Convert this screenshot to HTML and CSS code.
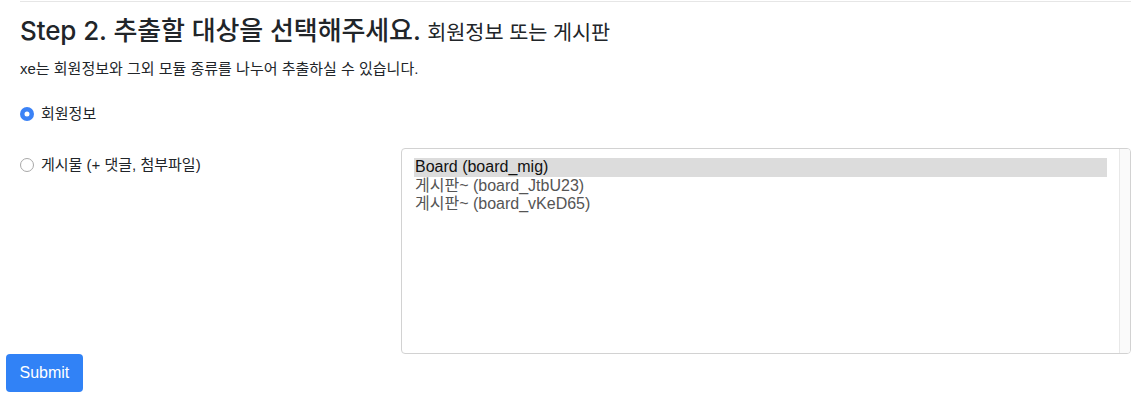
FILE: index.html
```html
<!DOCTYPE html>
<html lang="ko">
<head>
<meta charset="utf-8">
<title>Step 2</title>
<link rel="stylesheet" href="styles.css">
</head>
<body>
<form class="page">
  <div class="container">
    <hr class="rule">
    <h4 class="title">Step 2. 추출할 대상을 선택해주세요. <small class="subtitle">회원정보 또는 게시판</small></h4>
    <p class="desc">xe는 회원정보와 그외 모듈 종류를 나누어 추출하실 수 있습니다.</p>
    <div class="option-row">
      <label class="radio"><input type="radio" name="target" value="member" checked> <span>회원정보</span></label>
    </div>
    <div class="board-row">
      <label class="radio board-label"><input type="radio" name="target" value="board"> <span>게시물 (+ 댓글, 첨부파일)</span></label>
      <div class="listbox">
        <div class="listbox-items" role="listbox" aria-multiselectable="true">
          <div class="item selected" role="option" aria-selected="true">Board (board_mig)</div>
          <div class="item" role="option">게시판~ (board_JtbU23)</div>
          <div class="item" role="option">게시판~ (board_vKeD65)</div>
        </div>
        <div class="listbox-track"></div>
      </div>
    </div>
  </div>
  <div class="actions">
    <button type="button" class="btn">Submit</button>
  </div>
</form>
</body>
</html>
```
FILE: styles.css
```css
html, body {
  margin: 0;
  padding: 0;
  background: #fff;
}
body {
  font-family: "Liberation Sans", "Noto Sans CJK KR", sans-serif;
  color: #212529;
  font-size: 15px;
  line-height: 1.5;
}
.container {
  padding: 0 12px 0 20px;
}
.rule {
  margin: 1px 0 0 0;
  border: 0;
  border-top: 1px solid #e6e6e6;
  height: 0;
}
.title {
  margin: 13px 0 10px 0;
  font-family: "Inter", "Noto Sans CJK KR", sans-serif;
  font-size: 26px;
  font-weight: 500;
  line-height: 31px;
  letter-spacing: -0.1px;
}
.subtitle {
  font-size: 80%;
  font-weight: 400;
}
.desc {
  margin: 0;
  line-height: 21px;
}
.option-row {
  margin-top: 24px;
  height: 21px;
}
.radio {
  display: inline-flex;
  align-items: center;
  gap: 7px;
  line-height: 21px;
}
.radio input {
  appearance: none;
  -webkit-appearance: none;
  margin: 0;
  width: 14px;
  height: 14px;
  border-radius: 50%;
  border: 1px solid #a8a8a8;
  background: #fff;
  box-sizing: border-box;
}
.radio input:checked {
  border: 0;
  box-shadow: inset 0 0 0 4.5px #3b82f6;
}
.board-row {
  margin-top: 24px;
  display: grid;
  grid-template-columns: 381px 1fr;
  align-items: start;
}
.board-label {
  padding-top: 6px;
}
.listbox {
  box-sizing: border-box;
  height: 206px;
  display: flex;
  border: 1px solid #d2d2d2;
  border-radius: 4px;
  background: #fff;
  overflow: hidden;
}
.listbox-items {
  flex: 1;
  min-width: 0;
  padding: 9px 12px 8px 12px;
  font-size: 16px;
  line-height: 18.5px;
  color: #555;
  overflow: hidden;
}
.listbox-track {
  width: 10px;
  flex: none;
  background: #fafafa;
  border-left: 1px solid #e8e8e8;
}
.item {
  padding: 0 1px;
  white-space: nowrap;
}
.item.selected {
  background: #dcdcdc;
  color: #111;
}
.actions {
  padding-left: 6px;
}
.btn {
  margin: 0;
  height: 38px;
  padding: 0 13.5px;
  border: 0;
  border-radius: 4px;
  background: #3182f6;
  color: #fff;
  font-family: "Liberation Sans", "Noto Sans CJK KR", sans-serif;
  font-size: 16px;
  line-height: 38px;
}
```
